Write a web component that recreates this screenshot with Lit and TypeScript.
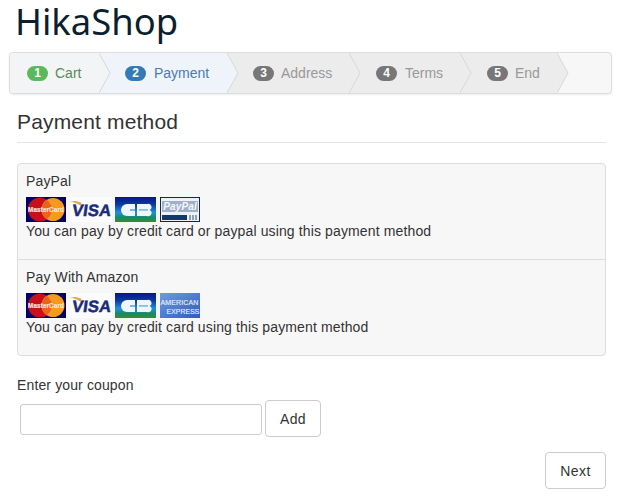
import { LitElement, html, css, svg } from "lit";
import { customElement } from "lit/decorators.js";

const mc = svg`<svg class="logo" width="40" height="25" viewBox="0 0 40 25"><rect width="40" height="25" fill="#00006a"/><circle cx="14" cy="12.5" r="12" fill="#c8101c"/><circle cx="27" cy="12.5" r="11.500" fill="#f59a1c"/><path d="M20.500 2.800a11.500 11.500 0 0 1 0 19.400a12 12 0 0 1 0-19.400z" fill="#e8641c"/><text x="20" y="14.800" text-anchor="middle" font-size="6.300" font-weight="700" stroke="#f4e6dc" stroke-width=".2" fill="#f4e6dc" font-family="Liberation Sans">MasterCard</text></svg>`;
const visa = svg`<svg class="logo" width="42" height="25" viewBox="0 0 42 25"><rect width="42" height="25" fill="#fbfbfd"/><path d="M0 4.500c4-1 8-.5 11 1l2 6c-2-3-6-5.500-13-7z" fill="#e0ac50"/><text transform="translate(21 19) skewX(-8)" text-anchor="middle" font-size="16.500" font-weight="700" stroke="#1a2c78" stroke-width=".5" fill="#1a2c78" font-family="Liberation Sans">VISA</text></svg>`;
const cb = svg`<svg class="logo" width="41" height="25" viewBox="0 0 41 25"><defs><linearGradient id="cbg" x1="0" y1="0" x2="0" y2="1"><stop offset="0" stop-color="#08148c"/><stop offset=".3" stop-color="#0a3aa0"/><stop offset=".62" stop-color="#1e90e0"/><stop offset=".82" stop-color="#1a8a66"/><stop offset="1" stop-color="#3a8a30"/></linearGradient></defs><rect width="41" height="25" fill="url(#cbg)"/><path d="M20 7h-8a6 6 0 0 0 0 12h8z" fill="#eef6fb"/><path d="M22 7h10a3 3 0 0 1 2.500 5.900a3 3 0 0 1-2.500 6.100h-10z" fill="#eef6fb"/><rect x="15" y="12" width="5" height="2" fill="#7ab8e4"/><rect x="24" y="12.100" width="9" height="1.600" fill="#7ab8e4"/></svg>`;
const pp = svg`<svg class="logo" width="40" height="25" viewBox="0 0 40 25"><rect x=".5" y=".5" width="39" height="24" fill="#eef2f6" stroke="#0f2a52"/><rect x="2" y="4" width="36" height="11" fill="#9fb0c8"/><text x="20" y="13" text-anchor="middle" font-size="10" font-weight="700" font-style="italic" fill="#f5f7fa" font-family="Liberation Sans">PayPal</text><rect x="2" y="18" width="25" height="5" fill="#0f3a6a"/><rect x="29" y="18" width="2" height="5" fill="#8fa2ba"/><rect x="32" y="18" width="2" height="5" fill="#8fa2ba"/><rect x="35" y="18" width="2" height="5" fill="#8fa2ba"/></svg>`;
const amex = svg`<svg class="logo" width="40" height="25" viewBox="0 0 40 25"><defs><linearGradient id="axg" x1="0" y1="0" x2="1" y2="1"><stop offset="0" stop-color="#6f9be0"/><stop offset="1" stop-color="#2f5cc0"/></linearGradient></defs><rect width="40" height="25" fill="url(#axg)"/><text x="0.500" y="12" font-size="7" fill="#e6eefa" stroke="#e6eefa" stroke-width=".15" font-family="Liberation Sans">AMERICAN</text><text x="39.500" y="21" text-anchor="end" font-size="6.800" fill="#e6eefa" stroke="#e6eefa" stroke-width=".15" font-family="Liberation Sans">EXPRESS</text></svg>`;

type Step = { n: number; label: string; cls: string; w: number; pad: number; gap: number };
const STEPS: Step[] = [
  { n: 1, label: "Cart", cls: "done", w: 89, pad: 17, gap: 7 },
  { n: 2, label: "Payment", cls: "now", w: 128, pad: 26, gap: 8 },
  { n: 3, label: "Address", cls: "todo", w: 122, pad: 26, gap: 7 },
  { n: 4, label: "Terms", cls: "todo", w: 111, pad: 27, gap: 8 },
  { n: 5, label: "End", cls: "todo", w: 97, pad: 27, gap: 7 },
];

@customElement("app-root")
export class AppRoot extends LitElement {
  static styles = css`
    :host { display: block; width: 631px; height: 502px; overflow: hidden; background: #fff; font-family: "Liberation Sans", Arial, sans-serif; font-size: 14px; line-height: 20px; color: #333; letter-spacing: .13px; box-sizing: border-box; padding: 0 19px 0 9px; }
    h1 { margin: 0; padding-left: 6px; height: 52px; font: 400 36.4px/42px "Noto Sans", sans-serif; color: #0b1f2e; letter-spacing: 0; }
    .bar { display: flex; height: 42px; box-sizing: border-box; border: 1px solid #ddd; border-radius: 4px; background: #f7f7f7; box-shadow: 0 1px 2px rgba(0,0,0,.08); width: 603px; }
    .step { position: relative; box-sizing: border-box; height: 40px; display: flex; align-items: center; flex: none; font-size: 14px; letter-spacing: 0; }
    .step:first-child { border-radius: 3px 0 0 3px; }
    .arrow { position: absolute; top: 0; left: 100%; z-index: 1; display: block; }
    .done { background: #f3f4f5; color: #5a8a5a; }
    .now { background: #eff4fb; color: #4a7cac; }
    .todo { background: #ececec; color: #999; }
    .badge { display: inline-block; min-width: 7px; height: 15px; line-height: 15px; padding: 0 7px; border-radius: 8px; font-size: 12px; font-weight: 700; color: #fff; text-align: center; }
    .done .badge { background: #5cb85c; }
    .now .badge { background: #337ab7; }
    .todo .badge { background: #777; }
    .content { padding: 0 0 0 8px; width: 589px; }
    h3 { margin: 0; padding: 15px 0 8px; height: 25px; font: 400 21px/25px "Liberation Sans", Arial, sans-serif; color: #333; letter-spacing: .17px; border-bottom: 1px solid #e5e5e5; }
    .panel { margin-top: 20px; border: 1px solid #ddd; border-radius: 4px; background: #f7f7f7; }
    .row { height: 95px; box-sizing: border-box; padding: 7px 8px 0; }
    .row + .row { border-top: 1px solid #ddd; height: 96px; }
    .name { height: 20px; margin-bottom: 6px; }
    .logos { display: flex; gap: 4px; height: 25px; }
    .logos svg:nth-child(2) { margin-right: -1px; }
    .logo { display: block; }
    .desc { height: 20px; margin-top: -1px; }
    .coupon-label { margin-top: 19px; height: 20px; }
    .coupon { display: flex; align-items: flex-start; gap: 3px; margin-top: 5px; padding-left: 3px; }
    input { width: 242px; height: 31px; box-sizing: border-box; border: 1px solid #ccc; border-radius: 3px; background: #fff; padding: 0; margin: 4px 0 0; }
    button { font: 14px/20px "Liberation Sans", Arial, sans-serif; letter-spacing: .4px; color: #333; height: 37px; background: #fff; border: 1px solid #ccc; border-radius: 4px; padding: 0; }
    .add { width: 56px; }
    .actions { display: flex; justify-content: flex-end; margin-top: 15px; }
    .next { width: 61px; }
  `;

  private arrow(cls: string) {
    const fill = cls === "done" ? "#f3f4f5" : cls === "now" ? "#eff4fb" : "#ececec";
    return html`<svg class="arrow" width="12" height="40" viewBox="0 0 12 40"><path d="M0 0L11 20L0 40z" fill=${fill}/><path d="M0 0L11 20L0 40" fill="none" stroke="#d8d8d8"/></svg>`;
  }

  render() {
    return html`
      <h1>HikaShop</h1>
      <div class="bar">
        ${STEPS.map((s) => html`<div class="step ${s.cls}" style="width:${s.w}px;padding-left:${s.pad}px;gap:${s.gap}px"><span class="badge">${s.n}</span><span>${s.label}</span>${this.arrow(s.cls)}</div>`)}
      </div>
      <div class="content">
        <h3>Payment method</h3>
        <div class="panel">
          <div class="row">
            <div class="name">PayPal</div>
            <div class="logos">${mc}${visa}${cb}${pp}</div>
            <div class="desc">You can pay by credit card or paypal using this payment method</div>
          </div>
          <div class="row">
            <div class="name">Pay With Amazon</div>
            <div class="logos">${mc}${visa}${cb}${amex}</div>
            <div class="desc">You can pay by credit card using this payment method</div>
          </div>
        </div>
        <div class="coupon-label">Enter your coupon</div>
        <div class="coupon"><input type="text" /><button class="add">Add</button></div>
        <div class="actions"><button class="next">Next</button></div>
      </div>
    `;
  }
}
